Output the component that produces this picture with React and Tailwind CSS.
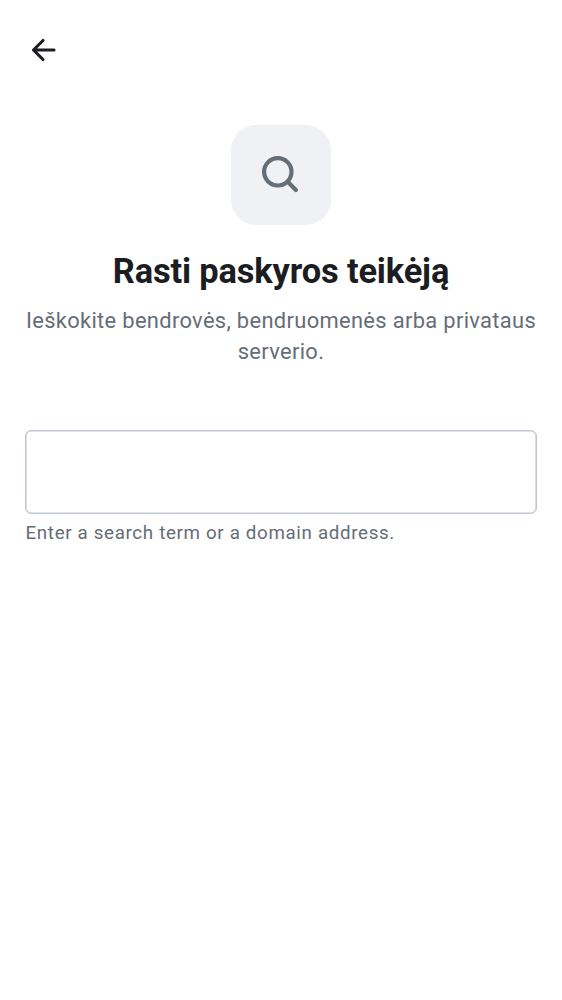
export default function App() {
  return (
    <main className="flex h-[1000px] w-[562px] flex-col bg-white px-[25px] pt-[31px] font-['Roboto',sans-serif]">
      <button type="button" aria-label="Back" className="flex size-[38px] items-center justify-center text-[#1b1d22]">
        <svg width="38" height="38" viewBox="0 0 38 38" fill="none" stroke="currentColor" strokeWidth="3.1" strokeLinecap="round" strokeLinejoin="round">
          <path d="M29 19H8.5M18 9.5 8.5 19l9.5 9.5" />
        </svg>
      </button>
      <div className="mt-[56px] flex size-[100px] items-center justify-center self-center rounded-[25px] bg-[#f0f1f5]">
        <svg width="50" height="50" viewBox="0 0 50 50" fill="none" stroke="#656d77" strokeWidth="4.2" strokeLinecap="round">
          <circle cx="21.8" cy="21.8" r="13.7" />
          <path d="m32 32 7.9 7.9" />
        </svg>
      </div>
      <h1 className="mt-[25px] text-center text-[34.4px] leading-[42px] font-bold tracking-[-0.14px] whitespace-nowrap text-[#1b1d22]">Rasti paskyros teikėją</h1>
      <p className="-mx-2 mt-[13px] text-center text-[21.9px] leading-[31px] tracking-[0.33px] text-[#656d77]">Ieškokite bendrovės, bendruomenės arba privataus<br />serverio.</p>
      <div className="mt-[63px] h-[84px] w-[512px] rounded-[6px] border border-[#c1c6d3] shadow-[inset_0_0_0_0.6px_#c1c6d3]" />
      <p className="mt-[7px] pl-[0.5px] text-[18.75px] leading-[25px] tracking-[0.66px] text-[#656d77]">Enter a search term or a domain address.</p>
    </main>
  );
}
